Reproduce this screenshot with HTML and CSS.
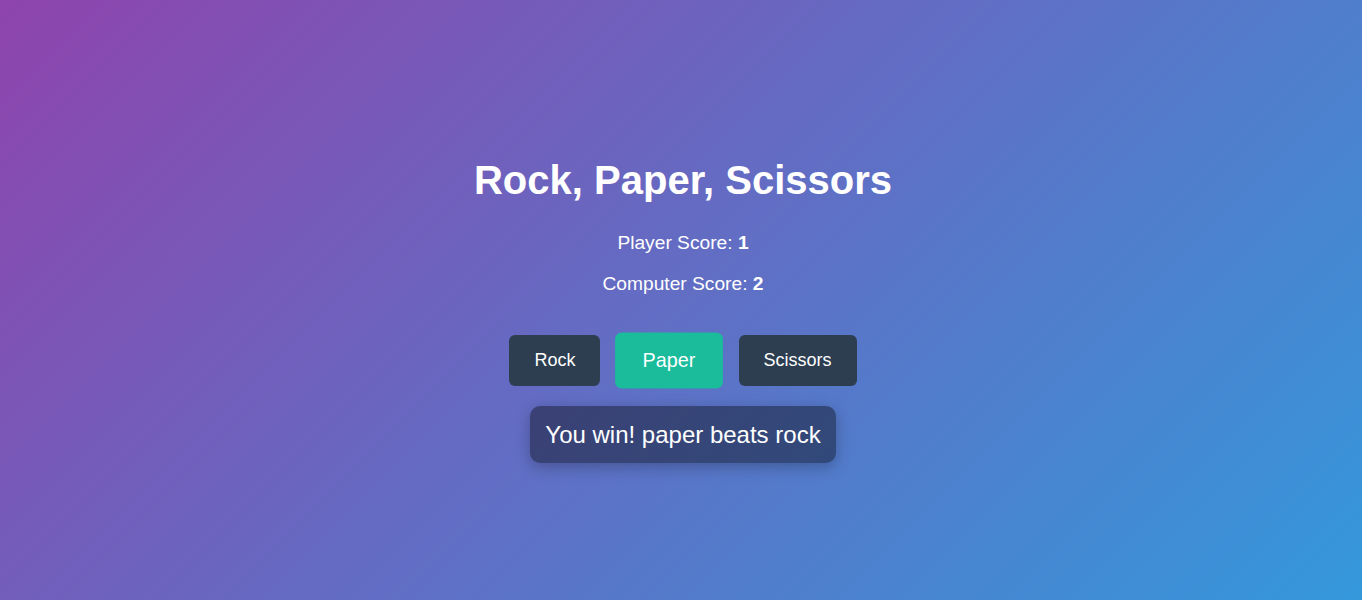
FILE: index.html
```html
<!DOCTYPE html>
<html lang="en">
<head>
<meta charset="utf-8">
<title>Rock, Paper, Scissors</title>
<link rel="stylesheet" href="styles.css">
</head>
<body>
<main class="game">
  <h1 class="title">Rock, Paper, Scissors</h1>
  <p class="score">Player Score: <strong>1</strong></p>
  <p class="score score-last">Computer Score: <strong>2</strong></p>
  <div class="choices">
    <button class="choice">Rock</button>
    <button class="choice choice-active">Paper</button>
    <button class="choice">Scissors</button>
  </div>
  <div class="result">You win! paper beats rock</div>
</main>
</body>
</html>
```
FILE: styles.css
```css
html, body {
  margin: 0;
  padding: 0;
}
body {
  min-height: 100vh;
  background: linear-gradient(135deg, #8e44ad, #3498db);
  font-family: "Liberation Sans", Arial, sans-serif;
  color: #fff;
  display: flex;
  align-items: center;
  justify-content: center;
}
.game {
  display: flex;
  flex-direction: column;
  align-items: center;
  padding-top: 20px;
  padding-left: 4px;
}
.title {
  font-size: 40px;
  line-height: 46px;
  font-weight: bold;
  margin: 0 0 29px;
}
.score {
  font-size: 19.2px;
  line-height: 22px;
  margin: 0 0 19px;
}
.score-last {
  margin-bottom: 40px;
}
.choices {
  display: flex;
  gap: 20px;
  align-items: center;
}
.choice {
  font-family: "Liberation Sans", Arial, sans-serif;
  font-size: 18px;
  line-height: 21px;
  padding: 15px 25px;
  border: none;
  border-radius: 6px;
  background: #2c3e50;
  color: #fff;
  cursor: pointer;
}
.choice-active {
  background: #1abc9c;
  transform: scale(1.1);
}
.result {
  margin-top: 20px;
  font-size: 24px;
  line-height: 27px;
  padding: 15px 15px;
  background: rgba(0, 0, 0, 0.4);
  border-radius: 10px;
  box-shadow: 0 4px 15px rgba(0, 0, 0, 0.25);
}
```
